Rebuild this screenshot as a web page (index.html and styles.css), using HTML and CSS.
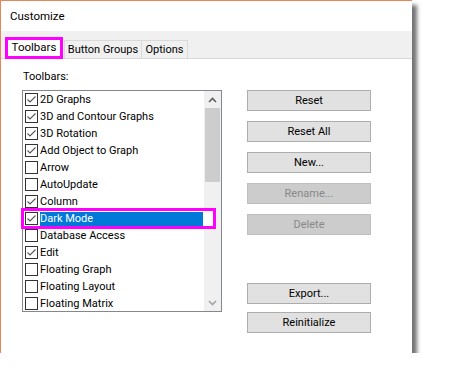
FILE: index.html
```html
<!DOCTYPE html>
<html>
<head>
<meta charset="utf-8">
<link rel="stylesheet" href="styles.css">
</head>
<body>
<div class="window">
  <div class="title">Customize</div>
  <div class="tabstrip">
    <div class="tab active">Toolbars</div>
    <div class="tab tab-bg">Button Groups</div>
    <div class="tab tab-opt">Options</div>
  </div>
  <div class="panel">
    <div class="label">Toolbars:</div>
    <div></div>
    <div class="list">
      <div class="items">
        <div class="item"><span class="cb"><svg viewBox="0 0 11 11"><path d="M1.5 5.5 L4 8 L9.5 2.5"/></svg></span><span class="txt">2D Graphs</span></div>
        <div class="item"><span class="cb"><svg viewBox="0 0 11 11"><path d="M1.5 5.5 L4 8 L9.5 2.5"/></svg></span><span class="txt">3D and Contour Graphs</span></div>
        <div class="item"><span class="cb"><svg viewBox="0 0 11 11"><path d="M1.5 5.5 L4 8 L9.5 2.5"/></svg></span><span class="txt">3D Rotation</span></div>
        <div class="item"><span class="cb"><svg viewBox="0 0 11 11"><path d="M1.5 5.5 L4 8 L9.5 2.5"/></svg></span><span class="txt">Add Object to Graph</span></div>
        <div class="item"><span class="cb"></span><span class="txt">Arrow</span></div>
        <div class="item"><span class="cb"></span><span class="txt">AutoUpdate</span></div>
        <div class="item"><span class="cb"><svg viewBox="0 0 11 11"><path d="M1.5 5.5 L4 8 L9.5 2.5"/></svg></span><span class="txt">Column</span></div>
        <div class="item sel"><span class="cb"><svg viewBox="0 0 11 11"><path d="M1.5 5.5 L4 8 L9.5 2.5"/></svg></span><span class="txt">Dark Mode</span><span class="annot"></span></div>
        <div class="item"><span class="cb"></span><span class="txt">Database Access</span></div>
        <div class="item"><span class="cb"><svg viewBox="0 0 11 11"><path d="M1.5 5.5 L4 8 L9.5 2.5"/></svg></span><span class="txt">Edit</span></div>
        <div class="item"><span class="cb"></span><span class="txt">Floating Graph</span></div>
        <div class="item"><span class="cb"></span><span class="txt">Floating Layout</span></div>
        <div class="item"><span class="cb"></span><span class="txt">Floating Matrix</span></div>
      </div>
      <div class="sb">
        <div class="sb-btn"><svg viewBox="0 0 9 6"><path class="up" d="M1 5 L4.5 1.5 L8 5"/></svg></div>
        <div class="sb-thumb"></div>
        <div class="sb-track"></div>
        <div class="sb-btn"><svg viewBox="0 0 9 6"><path class="down" d="M1 1 L4.5 4.5 L8 1"/></svg></div>
      </div>
    </div>
    <div class="buttons">
      <div class="btn">Reset</div>
      <div class="btn">Reset All</div>
      <div class="btn">New...</div>
      <div class="btn disabled">Rename...</div>
      <div class="btn disabled">Delete</div>
      <div class="btn export">Export...</div>
      <div class="btn reinit">Reinitialize</div>
    </div>
  </div>
</div>
</body>
</html>
```
FILE: styles.css
```css
html, body {
  margin: 0;
  padding: 0;
  background: #ffffff;
}
body {
  font-family: Roboto, "Liberation Sans", sans-serif;
  font-size: 11px;
  color: #000;
}
.window {
  width: 411px;
  height: 352px;
  border-left: 1px solid #e4875a;
  border-top: 1px solid #e4875a;
  background: #ffffff;
  box-shadow: 5px 5px 4px rgba(0, 0, 0, 0.55);
  display: flex;
  flex-direction: column;
}
.title {
  height: 30px;
  line-height: 30px;
  padding-left: 9px;
  font-size: 11.5px;
}
.tabstrip {
  height: 27px;
  background: #f0f0f0;
  border-bottom: 1px solid #d9d9d9;
  display: flex;
  align-items: flex-end;
  padding-left: 4px;
}
.tab {
  box-sizing: border-box;
  height: 18px;
  border: 1px solid #d9d9d9;
  border-bottom: none;
  background: #f0f0f0;
  display: flex;
  align-items: center;
  justify-content: center;
  line-height: 1;
}
.tab.active {
  width: 58px;
  height: 22px;
  margin-bottom: -1px;
  border: 3px solid #ff00ff;
  background: #ffffff;
  font-size: 11.5px;
  padding-bottom: 1px;
}
.tab-bg {
  width: 78px;
  margin-left: 1px;
}
.tab-opt {
  width: 46px;
  border-left: none;
}
.panel {
  flex: 1;
  display: grid;
  grid-template-columns: 200px 124px;
  grid-template-rows: 16px auto;
  column-gap: 25px;
  row-gap: 5px;
  padding: 10px 0 0 21px;
  align-content: start;
}
.label {
  line-height: 16px;
  padding-left: 1px;
}
.list {
  box-sizing: border-box;
  height: 222px;
  border: 1px solid #828790;
  display: flex;
  background: #fff;
}
.items {
  flex: 1;
  height: 220px;
}
.item {
  position: relative;
  height: 17px;
  display: flex;
  align-items: center;
}
.cb {
  box-sizing: border-box;
  width: 13px;
  height: 13px;
  margin-left: 2px;
  margin-right: 2px;
  border: 1px solid #333333;
  background: #fff;
  display: flex;
}
.cb svg {
  width: 11px;
  height: 11px;
}
.cb path {
  fill: none;
  stroke: #555555;
  stroke-width: 1.1;
}
.txt {
  flex: 1;
  height: 17px;
  line-height: 17px;
  white-space: nowrap;
}
.sel .txt {
  background: #0078d7;
  color: #ffffff;
  height: 14px;
  line-height: 14px;
  border-right: 1px dotted #ffffff;
}
.annot {
  position: absolute;
  left: -2px;
  top: -2px;
  width: 195px;
  height: 21px;
  box-sizing: border-box;
  border: 3px solid #ff00ff;
  background: linear-gradient(90deg, transparent 179px, #ffffff 179px);
}
.sb {
  width: 17px;
  background: #f0f0f0;
  display: flex;
  flex-direction: column;
}
.sb-btn {
  height: 17px;
  display: flex;
  align-items: center;
  justify-content: center;
}
.sb-btn svg {
  width: 9px;
  height: 6px;
}
.sb-btn path {
  fill: none;
  stroke-width: 1.6;
}
.sb-btn .up {
  stroke: #606060;
}
.sb-btn .down {
  stroke: #a3a3a3;
}
.sb-thumb {
  height: 74px;
  margin: 0 1px;
  background: #cdcdcd;
}
.sb-track {
  flex: 1;
}
.buttons {
  display: flex;
  flex-direction: column;
  gap: 10px;
}
.btn {
  box-sizing: border-box;
  height: 21px;
  border: 1px solid #adadad;
  background: #e1e1e1;
  display: flex;
  align-items: center;
  justify-content: center;
}
.btn.disabled {
  background: #cccccc;
  border-color: #bfbfbf;
  color: #888888;
}
.btn.export {
  margin-top: 38px;
}
.btn.reinit {
  margin-top: -2px;
}
```
